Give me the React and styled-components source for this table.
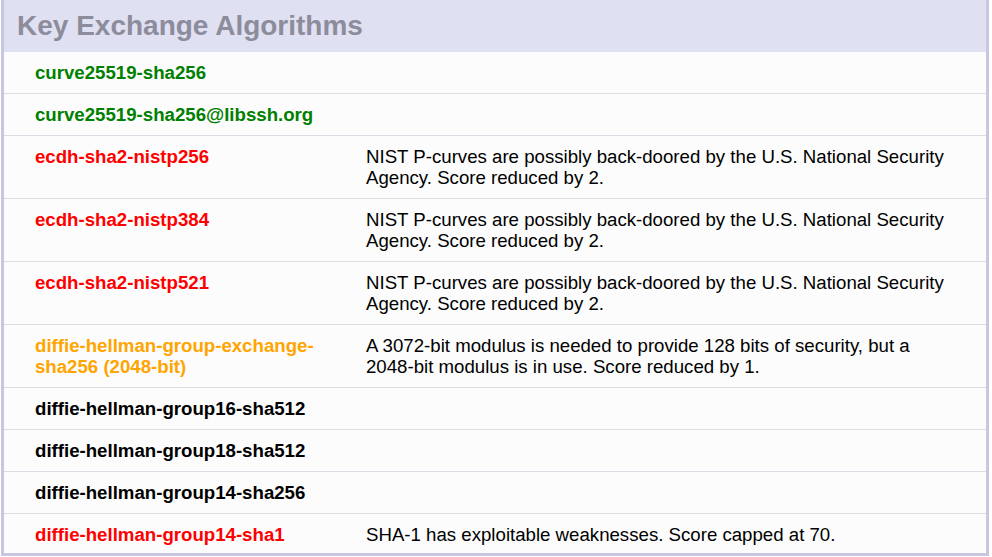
import React from 'react'
import styled, { createGlobalStyle } from 'styled-components'

const rows = [
  { name: 'curve25519-sha256', level: 'good' },
  { name: 'curve25519-sha256@libssh.org', level: 'good' },
  { name: 'ecdh-sha2-nistp256', level: 'bad', note: 'NIST P-curves are possibly back-doored by the U.S. National Security Agency. Score reduced by 2.' },
  { name: 'ecdh-sha2-nistp384', level: 'bad', note: 'NIST P-curves are possibly back-doored by the U.S. National Security Agency. Score reduced by 2.' },
  { name: 'ecdh-sha2-nistp521', level: 'bad', note: 'NIST P-curves are possibly back-doored by the U.S. National Security Agency. Score reduced by 2.' },
  { name: 'diffie-hellman-group-exchange-sha256 (2048-bit)', level: 'warn', note: 'A 3072-bit modulus is needed to provide 128 bits of security, but a 2048-bit modulus is in use. Score reduced by 1.' },
  { name: 'diffie-hellman-group16-sha512', level: 'ok' },
  { name: 'diffie-hellman-group18-sha512', level: 'ok' },
  { name: 'diffie-hellman-group14-sha256', level: 'ok' },
  { name: 'diffie-hellman-group14-sha1', level: 'bad', note: 'SHA-1 has exploitable weaknesses. Score capped at 70.' },
]

const colors = {
  good: '#008000',
  bad: '#ff0000',
  warn: '#ffa500',
  ok: '#000000',
}

function App() {
  return (
    <>
      <GlobalStyle />
      <Panel>
        <Header>
          <Title>Key Exchange Algorithms</Title>
        </Header>
        {rows.map((r) => (
          <Row key={r.name}>
            <Name $level={r.level}>{r.name}</Name>
            <Note>{r.note}</Note>
          </Row>
        ))}
      </Panel>
    </>
  )
}

export default App

const GlobalStyle = createGlobalStyle`
    body{
        margin: 0;
        background: #ffffff;
        font-family: "Liberation Sans", Arial, sans-serif;
    }
`
const Panel = styled.div`
    width: 988px;
    margin-left: 1px;
    box-sizing: border-box;
    border: 3px solid #c7c7e0;
    border-top: none;
    background: #fcfcfc;
`
const Header = styled.div`
    background: #e0e0f3;
    padding: 10px 13px;
    height: 52px;
    box-sizing: border-box;
`
const Title = styled.h2`
    margin: 0;
    font-size: 28px;
    line-height: 32px;
    font-weight: bold;
    color: #8c8c9b;
`
const Row = styled.div`
    display: grid;
    grid-template-columns: 331px 1fr;
    padding: 10px 32px 10px 31px;
    font-size: 18.65px;
    line-height: 21px;
    border-bottom: 1px solid #dcdce4;

    &:last-child{
        border-bottom: none;
        padding-bottom: 8px;
    }
`
const Name = styled.div`
    font-weight: bold;
    color: ${(p) => colors[p.$level]};
    padding-right: 10px;
`
const Note = styled.div`
    color: #000000;
`
